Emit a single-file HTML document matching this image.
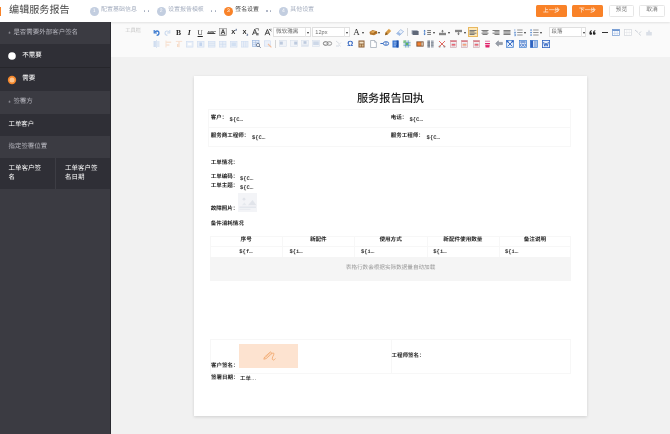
<!DOCTYPE html>
<html lang="zh-CN">
<head>
<meta charset="utf-8">
<title>编辑服务报告</title>
<style>
*{box-sizing:border-box;margin:0;padding:0}
html,body{width:670px;height:434px;overflow:hidden}
body{position:relative;background:#f1f1f1;font-family:"Liberation Sans","Noto Sans CJK SC",sans-serif;color:#333;font-size:6px;line-height:1;text-rendering:geometricPrecision}
#wrap{position:absolute;left:0;top:0;width:670px;height:434px;will-change:transform}
.abs{position:absolute;white-space:nowrap}
/* header */
#hdr{position:absolute;left:0;top:0;width:670px;height:21.6px;background:#fff;box-shadow:0 0.5px 2px rgba(0,0,0,.10);z-index:3}
#hbar{position:absolute;left:0;top:6.5px;width:1.2px;height:9px;background:#f98228}
#title{position:absolute;left:9px;top:4.9px;font-size:10.1px;line-height:13px;color:#444;white-space:nowrap}
.step{position:absolute;top:6.5px;height:9px;white-space:nowrap;font-size:5.95px;line-height:9px;color:#b4bcc9}
.step i{position:absolute;left:0;top:0;width:9px;height:9px;border-radius:50%;background:#c3cee0;color:#fff;font-style:normal;font-size:5px;line-height:9px;text-align:center}
.step span{position:absolute;left:11.4px;top:1.2px}
.step.on{color:#444}
.step.on i{background:#f98228}
.dots{position:absolute;top:10.4px;width:5px;height:1.4px}
.dots u{position:absolute;top:0;width:1.4px;height:1.4px;border-radius:50%;background:#a2abbd}
.dots u+u{left:3.6px}
.btn{position:absolute;top:5px;height:12.3px;border-radius:1.5px;font-size:5.65px;line-height:14.6px;text-align:center;white-space:nowrap}
.btn.o{background:#f98228;color:#fff}
.btn.w{background:#fff;border:0.5px solid #e6e6e6;color:#666;line-height:13.6px}
/* sidebar */
#side{z-index:4;position:absolute;left:0;top:22px;width:111px;height:412px;background:#3b3b42;border-right:1px solid #2a2a30}
.srow{position:absolute;left:0;width:110px;white-space:nowrap}
.srow.h{color:#aeaeb6;font-size:6.45px;line-height:8px}
.srow.d{background:#2f2f36;color:#fff;font-size:6.45px;line-height:8px}
.srow span{position:absolute}
.radio{position:absolute;left:8.6px;width:7.6px;height:7.6px;border-radius:50%;background:#fff}
.radio.on{left:7.8px;width:8.4px;height:8.4px;background:#fdc085;border:2px solid #f68a30}
/* toolbar */
#tb{position:absolute;left:111px;top:22px;width:559px;height:35px;background:#fafafa}
#tb .lbl{position:absolute;left:14.2px;top:6.6px;font-size:5.6px;line-height:8px;color:#c4c4c4}
.ic{position:absolute;overflow:visible}
.tx{position:absolute;height:10px;line-height:10px;text-align:center;white-space:nowrap}
.sp{position:absolute;width:0.5px;height:8px;background:#d4d4d4}
.act{position:absolute;width:10px;height:10px;background:#fde8b8;border:0.5px solid #e8b860}
.hr{position:absolute;width:6.5px;height:0.9px;background:#333}
.sel{position:absolute;height:10px;background:#fff;border:0.5px solid #e0e0e0;font-size:5.6px;line-height:10.4px;color:#6e6e6e;padding-left:2px;white-space:nowrap}
.sel s{position:absolute;right:4px;top:0;width:0.5px;height:9px;background:#e6e6e6}
.car{position:absolute;width:0;height:0;border-left:1.5px solid transparent;border-right:1.5px solid transparent;border-top:2px solid #333}
/* paper */
#paper{position:absolute;left:193.5px;top:75.5px;width:393.8px;height:340.3px;background:#fff;box-shadow:0 1px 3px rgba(0,0,0,.14)}
#pin{position:absolute;left:0.5px;top:0.5px;width:393px;height:339px}
#ptitle{position:absolute;left:0;top:16.6px;width:393px;text-align:center;font-size:11.2px;font-weight:500;line-height:16px;color:#222;white-space:nowrap}
.t{position:absolute;font-size:5.5px;line-height:7px;color:#222;white-space:nowrap}
.t b{font-weight:600}
.v{font-family:"Liberation Mono",monospace;font-size:5.5px;color:#333;font-weight:bold}
.bx{position:absolute;border:0.5px solid #f7f7f7}
.ln{position:absolute;background:#f7f7f7}
.th{text-align:center}
.ph{position:absolute;background:#f3f4f7}
.gb{position:absolute;background:#f5f5f5;color:#9a9a9a;font-size:5.6px;line-height:26.6px;overflow:hidden;text-align:center;white-space:nowrap}
.sig{position:absolute;background:#fde3d0}
.k{position:absolute;white-space:nowrap;line-height:1;font-family:"Liberation Sans","Noto Sans CJK SC",sans-serif}
.k span{position:absolute;left:0;top:0}
.k.b{font-weight:bold}
.ast{position:absolute;font-size:6.45px;line-height:8px;color:#aeaeb6}
.rd{position:absolute;width:10px;height:10px}
</style>
</head>
<body>
<div id="wrap">
<div id="hdr">
  <div id="hbar"></div>
  <div class="k" style="left:9.10px;top:5.85px;width:60.60px;height:10.1px;font-size:10.1px;color:#484848"><span>编辑服务报告</span></div>
  <div class="step" style="left:89.7px"><i>1</i></div><div class="k" style="left:101.10px;top:7.92px;width:35.82px;height:5.97px;font-size:5.97px;color:#a6afc0"><span>配置基础信息</span></div>
  <div class="dots" style="left:144.1px"><u></u><u></u></div>
  <div class="step" style="left:156.7px"><i>2</i></div><div class="k" style="left:168.00px;top:7.92px;width:35.82px;height:5.97px;font-size:5.97px;color:#a6afc0"><span>设置报告模板</span></div>
  <div class="dots" style="left:211.1px"><u></u><u></u></div>
  <div class="step on" style="left:224px"><i>3</i></div><div class="k" style="left:235.30px;top:7.96px;width:23.48px;height:5.87px;font-size:5.87px;color:#3c3c3c"><span>签名设置</span></div>
  <div class="dots" style="left:266.3px"><u></u><u></u></div>
  <div class="step" style="left:279px"><i>4</i></div><div class="k" style="left:290.20px;top:7.92px;width:23.88px;height:5.97px;font-size:5.97px;color:#a6afc0"><span>其他设置</span></div>
  <div class="btn o" style="left:536px;width:31px"></div><div class="k" style="left:543.10px;top:8.70px;width:16.80px;height:5.6px;font-size:5.6px;color:#fff"><span>上一步</span></div>
  <div class="btn o" style="left:572px;width:31px"></div><div class="k" style="left:579.10px;top:8.70px;width:16.80px;height:5.6px;font-size:5.6px;color:#fff"><span>下一步</span></div>
  <div class="btn w" style="left:608.6px;width:25.8px"></div><div class="k" style="left:615.85px;top:8.22px;width:11.50px;height:5.75px;font-size:5.75px;color:#707070"><span>预览</span></div>
  <div class="btn w" style="left:639.2px;width:25.8px"></div><div class="k" style="left:646.35px;top:8.22px;width:11.50px;height:5.75px;font-size:5.75px;color:#707070"><span>取消</span></div>
</div>
<div id="side">
  <div class="srow h" style="top:0;height:22.4px"><span class="ast" style="left:8.2px;top:8.5px">*</span></div><div class="k" style="left:13.40px;top:8.16px;width:64.70px;height:6.47px;font-size:6.47px;color:#b6b6be"><span>是否需要外部客户签名</span></div>
  <div class="srow d" style="top:22.4px;height:23px"><svg class="rd" style="left:7.4px;top:6.6px" viewBox="0 0 10 10"><circle cx="5" cy="5" r="3.8" fill="#fff"/></svg></div><div class="k" style="left:22.30px;top:30.77px;width:19.41px;height:6.47px;font-size:6.47px;color:#fff"><span>不需要</span></div>
  <div class="srow d" style="top:45px;height:23.9px;border-top:0.6px solid #26262b"><svg class="rd" style="left:7px;top:7.3px" viewBox="0 0 10 10"><circle cx="5" cy="5" r="4.2" fill="#f5872c"/><circle cx="5" cy="5" r="2.5" fill="#fdc48c"/></svg></div><div class="k" style="left:22.30px;top:54.17px;width:12.94px;height:6.47px;font-size:6.47px;color:#fff"><span>需要</span></div>
  <div class="srow h" style="top:68.9px;height:22.7px"><span class="ast" style="left:8.2px;top:9.4px">*</span></div><div class="k" style="left:13.40px;top:77.06px;width:19.41px;height:6.47px;font-size:6.47px;color:#b6b6be"><span>签署方</span></div>
  <div class="srow d" style="top:91.6px;height:22.3px"></div><div class="k" style="left:8.60px;top:99.80px;width:25.60px;height:6.4px;font-size:6.4px;color:#fff"><span>工单客户</span></div>
  <div class="srow h" style="top:113.9px;height:22.3px"></div><div class="k" style="left:8.60px;top:121.78px;width:38.58px;height:6.43px;font-size:6.43px;color:#b6b6be"><span>指定签署位置</span></div>
  <div class="srow d" style="top:136.2px;height:30.4px;width:110px"></div><div style="position:absolute;left:54.7px;top:136.2px;width:0.8px;height:30.4px;background:#3d3d44"></div><div class="k" style="left:8.60px;top:144.45px;width:32.50px;height:6.5px;font-size:6.5px;color:#fff"><span>工单客户签</span></div><div class="k" style="left:8.60px;top:152.75px;width:6.50px;height:6.5px;font-size:6.5px;color:#fff"><span>名</span></div>
  <div class="k" style="left:64.90px;top:144.45px;width:32.50px;height:6.5px;font-size:6.5px;color:#fff"><span>工单客户签</span></div><div class="k" style="left:64.90px;top:152.75px;width:19.50px;height:6.5px;font-size:6.5px;color:#fff"><span>名日期</span></div>
</div>
<div id="tb">
  <div class="k" style="left:14.30px;top:7.48px;width:15.75px;height:5.25px;font-size:5.25px;color:#c2c2c2"><span>工具栏</span></div>
  <svg class="ic" style="left:41.7px;top:6.9px;width:7px;height:7px" viewBox="0 0 7 7"><path d="M1.2 1 L1.2 4 L4 4" fill="none" stroke="#3b7ad0" stroke-width="1.2"/><path d="M1.6 3.6 C3 1.2 6 1.6 6 4 C6 5.4 5 6.3 3.6 6.4" fill="none" stroke="#3b7ad0" stroke-width="1.3"/></svg>
  <svg class="ic" style="left:52.5px;top:6.9px;width:7px;height:7px;opacity:0.7" viewBox="0 0 7 7"><path d="M5.8 1 L5.8 4 L3 4" fill="none" stroke="#b9cde8" stroke-width="1.1"/><path d="M5.4 3.6 C4 1.2 1 1.6 1 4 C1 5.4 2 6.3 3.4 6.4" fill="none" stroke="#b9cde8" stroke-width="1.1"/></svg>
  <div class="tx" style="left:62.5px;top:6.0px;width:10px;font-family:'Liberation Serif',serif;font-weight:bold;font-size:7.5px;color:#222">B</div>
  <div class="tx" style="left:73.2px;top:6.0px;width:10px;font-family:'Liberation Serif',serif;font-weight:bold;font-style:italic;font-size:7.5px;color:#222">I</div>
  <div class="tx" style="left:84.2px;top:6.0px;width:10px;font-family:'Liberation Serif',serif;font-size:7.2px;color:#222;text-decoration:underline">U</div>
  <div class="tx" style="left:94.4px;top:5.8px;width:12px;font-family:'Liberation Sans',sans-serif;font-weight:bold;font-style:italic;font-size:4.3px;color:#333;letter-spacing:-0.2px">ABC</div>
  <div class="hr" style="left:96.6px;top:10.9px;width:7.6px;height:0.5px;background:#444"></div>
  <svg class="ic" style="left:107.9px;top:6.4px;width:8px;height:8px" viewBox="0 0 8 8"><rect x="0.4" y="0.4" width="7.2" height="7.2" fill="#ececec" stroke="#8a8a8a" stroke-width="0.6"/><path d="M2.2 6 L4 1.4 L5.8 6 M2.9 4.4 L5.1 4.4" fill="none" stroke="#222" stroke-width="0.8"/><path d="M1.6 6.9 H6.4" stroke="#333" stroke-width="0.5"/></svg>
  <div class="tx" style="left:118.2px;top:5.7px;width:10px;font-family:'Liberation Sans',sans-serif;font-weight:bold;font-size:6px;color:#222">X<sup style="font-size:3.2px;color:#223a6a;vertical-align:top;line-height:5px">2</sup></div>
  <div class="tx" style="left:129.4px;top:5.7px;width:10px;font-family:'Liberation Sans',sans-serif;font-weight:bold;font-size:6px;color:#222">X<sub style="font-size:3.2px;color:#223a6a;vertical-align:bottom;line-height:5px">2</sub></div>
  <svg class="ic" style="left:140.3px;top:6.4px;width:8px;height:8px" viewBox="0 0 8 8"><path d="M1.5 7 L3.8 1.2 L6.1 7 M2.4 5 L5.2 5" fill="none" stroke="#333" stroke-width="0.9"/><path d="M4.5 0.6 L7.4 0.6 L7.4 2.6" fill="none" stroke="#555" stroke-width="0.7"/><rect x="5.2" y="5" width="2.4" height="2.4" fill="#777"/></svg>
  <svg class="ic" style="left:153.3px;top:6.4px;width:8px;height:8px" viewBox="0 0 8 8"><path d="M1 7.2 L3.4 1.4 L5.8 7.2 M1.9 5.2 L4.8 5.2" fill="none" stroke="#333" stroke-width="0.9"/><path d="M5 1 L7.5 3.2" stroke="#555" stroke-width="0.9"/><circle cx="7" cy="1.2" r="0.6" fill="#777"/></svg>
  <div class="sel" style="left:162.4px;top:5.4px;width:37.6px"><!--sel1--><s></s></div>
  <div class="car" style="left:196.3px;top:9.7px"></div>
  <div class="sel" style="left:201.3px;top:5.4px;width:37.7px">12px<s></s></div>
  <div class="car" style="left:235.3px;top:9.7px"></div>
  <div class="tx" style="left:240.6px;top:5.4px;width:10px;font-family:'Liberation Serif',serif;font-size:9px;color:#333">A</div>
  <div class="car" style="left:251.0px;top:9.7px"></div>
  <svg class="ic" style="left:257.5px;top:6.9px;width:9px;height:7px" viewBox="0 0 9 7"><path d="M0.5 3 L3.5 1 L8 2.2 L8.4 4.5 L5 6.3 L1 5.4 Z" fill="#b5762a"/><path d="M1.2 3.2 L3.6 1.8 L7 2.6 L4.6 4.2 Z" fill="#e0a757"/><path d="M4.6 4.2 L7.6 2.8" stroke="#7a4a14" stroke-width="0.6"/></svg>
  <div class="car" style="left:267.0px;top:9.7px"></div>
  <svg class="ic" style="left:273.3px;top:6.4px;width:8px;height:8px" viewBox="0 0 8 8"><path d="M5 0.8 L7.2 3 L4 6.2 L1 7.2 L1.8 4 Z" fill="#d79a45"/><path d="M1 7.2 L1.8 4 L4 6.2 Z" fill="#8a5a1c"/><path d="M5.6 1.4 L6.6 2.4" stroke="#f4d9a8" stroke-width="0.8"/></svg>
  <svg class="ic" style="left:284.8px;top:6.9px;width:8px;height:7px" viewBox="0 0 8 7"><path d="M4.6 0.6 L7.6 2.6 L3.6 6.4 L0.6 4.6 Z" fill="#eaf1fb" stroke="#8faedb" stroke-width="0.7"/><path d="M0.6 4.6 L2.4 3 L5.2 4.9 L3.6 6.4 Z" fill="#9fbbe3"/></svg>
  <div class="sp" style="left:295.7px;top:6.4px"></div>
  <svg class="ic" style="left:300.0px;top:6.9px;width:8px;height:7px" viewBox="0 0 8 7"><rect x="0.6" y="1.2" width="6" height="4" fill="#97a0b0"/><rect x="1.6" y="2" width="6" height="4" fill="#5f6878"/></svg>
  <svg class="ic" style="left:311.5px;top:6.9px;width:9px;height:7px" viewBox="0 0 9 7"><path d="M1.6 0.8 L0.4 2.2 L2.8 2.2 Z M1.6 6.2 L0.4 4.8 L2.8 4.8 Z" fill="#3b74c4"/><path d="M1.6 2 L1.6 5" stroke="#3b74c4" stroke-width="0.7"/><path d="M4.2 1.6 H8 M4.2 3.5 H8 M4.2 5.4 H8" stroke="#666" stroke-width="0.9"/></svg>
  <div class="car" style="left:321.5px;top:9.7px"></div>
  <svg class="ic" style="left:327.2px;top:6.9px;width:9px;height:7px" viewBox="0 0 9 7"><path d="M4.5 0.8 L3.2 2.4 L5.8 2.4 Z" fill="#666"/><path d="M4.5 2.2 V3.6" stroke="#666" stroke-width="0.8"/><rect x="1" y="3.8" width="7" height="2.4" fill="#858585"/></svg>
  <div class="car" style="left:336.9px;top:9.7px"></div>
  <svg class="ic" style="left:342.8px;top:6.9px;width:9px;height:7px" viewBox="0 0 9 7"><rect x="1" y="0.8" width="7" height="2.4" fill="#858585"/><path d="M4.5 3.2 V4.8" stroke="#666" stroke-width="0.8"/><path d="M4.5 6.2 L3.2 4.6 L5.8 4.6 Z" fill="#666"/></svg>
  <div class="car" style="left:352.7px;top:9.7px"></div>
  <div class="act" style="left:357.0px;top:5.4px"></div>
  <svg class="ic" style="left:358.0px;top:6.9px;width:8px;height:7px" viewBox="0 0 8 7"><rect x="0.5" y="1.0" width="7" height="0.95" fill="#757575"/><rect x="0.5" y="2.35" width="5" height="0.95" fill="#757575"/><rect x="0.5" y="3.7" width="7" height="0.95" fill="#757575"/><rect x="0.5" y="5.050000000000001" width="5" height="0.95" fill="#757575"/></svg>
  <svg class="ic" style="left:370.0px;top:6.9px;width:8px;height:7px" viewBox="0 0 8 7"><rect x="0.5" y="1.0" width="7" height="0.95" fill="#757575"/><rect x="1.5" y="2.35" width="5" height="0.95" fill="#757575"/><rect x="0.5" y="3.7" width="7" height="0.95" fill="#757575"/><rect x="1.5" y="5.050000000000001" width="5" height="0.95" fill="#757575"/></svg>
  <svg class="ic" style="left:381.2px;top:6.9px;width:8px;height:7px" viewBox="0 0 8 7"><rect x="0.5" y="1.0" width="7" height="0.95" fill="#757575"/><rect x="2.5" y="2.35" width="5" height="0.95" fill="#757575"/><rect x="0.5" y="3.7" width="7" height="0.95" fill="#757575"/><rect x="2.5" y="5.050000000000001" width="5" height="0.95" fill="#757575"/></svg>
  <svg class="ic" style="left:392.3px;top:6.9px;width:8px;height:7px" viewBox="0 0 8 7"><rect x="0.5" y="1.0" width="7" height="0.95" fill="#757575"/><rect x="0.5" y="2.35" width="7" height="0.95" fill="#757575"/><rect x="0.5" y="3.7" width="7" height="0.95" fill="#757575"/><rect x="0.5" y="5.050000000000001" width="7" height="0.95" fill="#757575"/></svg>
  <svg class="ic" style="left:403.3px;top:6.9px;width:9px;height:7px" viewBox="0 0 9 7"><path d="M3.2 1 H8.6 M3.2 3.5 H8.6 M3.2 6 H8.6" stroke="#7a7a7a" stroke-width="0.8"/><path d="M0.8 0.2 V1.8 M0.4 3 H1.6 V3.6 H0.4 V4.2 H1.6 M0.4 5.4 H1.6 V6.8 H0.4 M0.4 6.1 H1.6" stroke="#2f6fc6" stroke-width="0.5" fill="none"/></svg>
  <div class="car" style="left:413.2px;top:9.7px"></div>
  <svg class="ic" style="left:419.3px;top:6.9px;width:9px;height:7px" viewBox="0 0 9 7"><path d="M3.2 1 H8.6 M3.2 3.5 H8.6 M3.2 6 H8.6" stroke="#7a7a7a" stroke-width="0.8"/><rect x="0.4" y="0.4" width="1.3" height="1.3" fill="#2f6fc6"/><rect x="0.4" y="2.9" width="1.3" height="1.3" fill="#2f6fc6"/><rect x="0.4" y="5.4" width="1.3" height="1.3" fill="#2f6fc6"/></svg>
  <div class="car" style="left:428.8px;top:9.7px"></div>
  <div class="sel" style="left:437.7px;top:5.4px;width:37.6px"><!--sel2--><s></s></div>
  <div class="car" style="left:471.6px;top:9.7px"></div>
  <svg class="ic" style="left:478.2px;top:7.9px;width:7px;height:5px" viewBox="0 0 7 5"><path d="M0.4 3.4 C0.4 1.6 1.2 0.6 2.8 0.3 L2.9 0.9 C2.1 1.2 1.8 1.7 1.8 2.2 C2.6 2.2 3.1 2.7 3.1 3.4 C3.1 4.2 2.5 4.7 1.8 4.7 C1 4.7 0.4 4.2 0.4 3.4 Z M3.9 3.4 C3.9 1.6 4.7 0.6 6.3 0.3 L6.4 0.9 C5.6 1.2 5.3 1.7 5.3 2.2 C6.1 2.2 6.6 2.7 6.6 3.4 C6.6 4.2 6 4.7 5.3 4.7 C4.5 4.7 3.9 4.2 3.9 3.4 Z" fill="#222"/></svg>
  <div class="hr" style="left:490.5px;top:10.0px"></div>
  <svg class="ic" style="left:500.5px;top:6.9px;width:8px;height:7px" viewBox="0 0 8 7"><rect x="0.4" y="0.4" width="7.2" height="6.2" fill="#fff" stroke="#6d95cf" stroke-width="0.7"/><rect x="0.4" y="0.4" width="7.2" height="1.6" fill="#6d95cf"/><path d="M2.8 2 V6.6 M5.2 2 V6.6 M0.4 4.3 H7.6" stroke="#a9c1e4" stroke-width="0.5"/></svg>
  <svg class="ic" style="left:512.8px;top:6.9px;width:8px;height:7px;opacity:0.8" viewBox="0 0 8 7"><rect x="0.4" y="0.4" width="7.2" height="6.2" fill="#fff" stroke="#c9cdd4" stroke-width="0.7"/><path d="M2.8 0.4 V6.6 M5.2 0.4 V6.6 M0.4 3.5 H7.6" stroke="#dadde2" stroke-width="0.5"/></svg>
  <svg class="ic" style="left:522.7px;top:6.9px;width:8px;height:7px;opacity:0.9" viewBox="0 0 8 7"><path d="M1 1 L4 3.5 M7 2.5 L5 4.5 L6.5 6.5" stroke="#c7ccd4" stroke-width="1" fill="none"/></svg>
  <svg class="ic" style="left:533.5px;top:6.9px;width:8px;height:7px;opacity:0.9" viewBox="0 0 8 7"><path d="M4 0.5 L5.2 3 H6.8 V6.4 H1.2 V3 H2.8 Z" fill="#d6dbe4"/></svg>
  <svg class="ic" style="left:41.7px;top:17.7px;width:7px;height:8px;opacity:0.5" viewBox="0 0 7 8"><rect x="0.5" y="1" width="2.4" height="6" fill="#a7c2e6"/><rect x="4.1" y="1" width="2.4" height="6" fill="#c6d8f0"/><path d="M3.5 0 V8" stroke="#8fb0de" stroke-width="0.6"/></svg>
  <svg class="ic" style="left:52.7px;top:17.7px;width:8px;height:8px;opacity:0.5" viewBox="0 0 8 8"><path d="M2 0.5 V7.5" stroke="#f3bf9a" stroke-width="0.8"/><path d="M2 2.2 H7.2 M2 5 H5.4" stroke="#f6cdb0" stroke-width="1.4"/></svg>
  <svg class="ic" style="left:63.5px;top:17.7px;width:8px;height:8px;opacity:0.5" viewBox="0 0 8 8"><path d="M0.8 1.4 H7.2" stroke="#f6c9ab" stroke-width="1"/><path d="M4 1.4 V7.2 M2.6 4 V7" stroke="#f3bf9a" stroke-width="1.2"/></svg>
  <svg class="ic" style="left:74.8px;top:18.5px;width:7.4px;height:6.5px;opacity:0.6" viewBox="0 0 8 7"><rect x="0.4" y="0.4" width="7.2" height="6.2" fill="#dfe9f7" stroke="#b4cbeb" stroke-width="0.7"/><rect x="2" y="2.2" width="4" height="2.4" fill="#fff"/></svg>
  <svg class="ic" style="left:85.8px;top:18.5px;width:7.4px;height:6.5px;opacity:0.6" viewBox="0 0 8 7"><rect x="0.4" y="0.4" width="7.2" height="6.2" fill="#dfe9f7" stroke="#b4cbeb" stroke-width="0.7"/><rect x="2.6" y="1.6" width="2.8" height="3.8" fill="#9fbce6"/></svg>
  <svg class="ic" style="left:96.7px;top:18.5px;width:7.4px;height:6.5px;opacity:0.6" viewBox="0 0 8 7"><rect x="0.4" y="0.4" width="7.2" height="6.2" fill="#dfe9f7" stroke="#b4cbeb" stroke-width="0.7"/><path d="M0.4 2.4 H7.6 M0.4 4.6 H7.6" stroke="#a9c3e8" stroke-width="0.6"/></svg>
  <svg class="ic" style="left:107.7px;top:18.5px;width:7.4px;height:6.5px;opacity:0.6" viewBox="0 0 8 7"><rect x="0.4" y="0.4" width="7.2" height="6.2" fill="#dfe9f7" stroke="#b4cbeb" stroke-width="0.7"/><path d="M4 0.4 V6.6 M0.4 3.5 H7.6" stroke="#a9c3e8" stroke-width="0.6"/></svg>
  <svg class="ic" style="left:118.7px;top:18.5px;width:7.4px;height:6.5px;opacity:0.6" viewBox="0 0 8 7"><rect x="0.4" y="0.4" width="7.2" height="6.2" fill="#dfe9f7" stroke="#b4cbeb" stroke-width="0.7"/><rect x="1.6" y="1.6" width="4.8" height="3.8" fill="#b9cfee"/></svg>
  <svg class="ic" style="left:130.1px;top:18.5px;width:7.4px;height:6.5px;opacity:0.6" viewBox="0 0 8 7"><rect x="0.4" y="0.4" width="7.2" height="6.2" fill="#dfe9f7" stroke="#b4cbeb" stroke-width="0.7"/><path d="M2.8 0.4 V6.6 M5.2 0.4 V6.6" stroke="#a9c3e8" stroke-width="0.6"/></svg>
  <svg class="ic" style="left:140.8px;top:17.7px;width:9px;height:8px" viewBox="0 0 9 8"><rect x="0.4" y="0.6" width="6.6" height="6" fill="#e7eef9" stroke="#9db8e0" stroke-width="0.7"/><path d="M0.4 2.6 H7 M0.4 4.6 H7 M3.6 0.6 V6.6" stroke="#9db8e0" stroke-width="0.5"/><circle cx="6" cy="5" r="1.6" fill="#fff" stroke="#4d5d78" stroke-width="0.7"/><path d="M7.1 6.2 L8.6 7.7" stroke="#4d5d78" stroke-width="0.9"/></svg>
  <svg class="ic" style="left:153.3px;top:17.7px;width:8px;height:8px;opacity:0.85" viewBox="0 0 8 8"><rect x="0.4" y="0.8" width="6" height="5.4" fill="#e9eff9" stroke="#c2d3ee" stroke-width="0.6"/><path d="M4 4 L7.4 7.4" stroke="#f3b48a" stroke-width="1.1"/></svg>
  <div class="sp" style="left:164.0px;top:17.7px"></div>
  <svg class="ic" style="left:167.6px;top:18.2px;width:8px;height:7px;opacity:0.8" viewBox="0 0 8 7"><rect x="0.4" y="0.4" width="7.2" height="6.2" fill="#eef2f8" stroke="#cfd9e8" stroke-width="0.6"/><rect x="0.8" y="1.6" width="3" height="3" fill="#aebfd8"/></svg>
  <svg class="ic" style="left:179.1px;top:18.2px;width:8px;height:7px;opacity:0.8" viewBox="0 0 8 7"><rect x="0.4" y="0.4" width="7.2" height="6.2" fill="#eef2f8" stroke="#cfd9e8" stroke-width="0.6"/><rect x="4.2" y="1.6" width="3" height="3" fill="#aebfd8"/></svg>
  <svg class="ic" style="left:190.1px;top:18.2px;width:8px;height:7px;opacity:0.8" viewBox="0 0 8 7"><rect x="0.4" y="0.4" width="7.2" height="6.2" fill="#eef2f8" stroke="#cfd9e8" stroke-width="0.6"/><rect x="2.5" y="1.2" width="3" height="2.6" fill="#aebfd8"/><path d="M1 5.2 H7" stroke="#c4d0e2" stroke-width="0.7"/></svg>
  <svg class="ic" style="left:201.3px;top:18.2px;width:8px;height:7px;opacity:0.8" viewBox="0 0 8 7"><rect x="0.4" y="0.4" width="7.2" height="6.2" fill="#eef2f8" stroke="#cfd9e8" stroke-width="0.6"/><rect x="1.2" y="1.4" width="5.6" height="3.6" fill="#c2d0e4"/></svg>
  <svg class="ic" style="left:212.2px;top:19.2px;width:9px;height:5px" viewBox="0 0 9 5"><rect x="0.4" y="0.8" width="4.6" height="3.4" rx="1.6" fill="none" stroke="#666" stroke-width="0.9"/><rect x="4" y="0.8" width="4.6" height="3.4" rx="1.6" fill="none" stroke="#888" stroke-width="0.9"/></svg>
  <svg class="ic" style="left:224.3px;top:17.7px;width:7px;height:8px;opacity:0.9" viewBox="0 0 7 8"><path d="M1 1 L4 3.5 M6 2.5 L4 4.5 L5.5 6.5" stroke="#d5d9e0" stroke-width="1" fill="none"/><rect x="1" y="5" width="3" height="2" fill="#e6e9ee"/></svg>
  <div class="tx" style="left:234.3px;top:16.7px;width:10px;font-family:'Liberation Sans',sans-serif;font-weight:bold;font-size:7.5px;color:#2f63c0">Ω</div>
  <svg class="ic" style="left:246.8px;top:17.7px;width:7px;height:8px" viewBox="0 0 7 8"><rect x="0.5" y="0.5" width="6" height="7" fill="#8a5a30"/><rect x="1.4" y="1.6" width="4.2" height="2" fill="#f1e3c8"/><rect x="1.4" y="4.4" width="1.8" height="2.2" fill="#d8b98a"/><rect x="3.8" y="4.4" width="1.8" height="2.2" fill="#d8b98a"/></svg>
  <svg class="ic" style="left:258.5px;top:17.7px;width:7px;height:8px" viewBox="0 0 7 8"><path d="M0.6 0.5 H4.6 L6.4 2.3 V7.5 H0.6 Z" fill="#fff" stroke="#9aa3b0" stroke-width="0.7"/><path d="M4.6 0.5 V2.3 H6.4" fill="none" stroke="#9aa3b0" stroke-width="0.6"/></svg>
  <svg class="ic" style="left:268.5px;top:19.2px;width:9px;height:5px" viewBox="0 0 9 5"><path d="M0.4 2.5 H3" stroke="#3a6fc4" stroke-width="1"/><rect x="3.4" y="0.8" width="5.2" height="3.4" rx="1.7" fill="none" stroke="#3a6fc4" stroke-width="1"/><path d="M6 0.8 V4.2" stroke="#3a6fc4" stroke-width="0.8"/></svg>
  <svg class="ic" style="left:280.7px;top:17.7px;width:7px;height:8px" viewBox="0 0 7 8"><rect x="0.5" y="0.5" width="6" height="7" fill="#2f6fd0"/><path d="M1.6 2.2 H5.4 M1.6 4 H5.4 M1.6 5.8 H4" stroke="#cfe0f8" stroke-width="0.7"/><rect x="4.6" y="0.5" width="1.9" height="7" fill="#1c4fa8"/></svg>
  <svg class="ic" style="left:292.0px;top:17.7px;width:8px;height:8px" viewBox="0 0 8 8"><rect x="0.4" y="0.4" width="7.2" height="7.2" fill="#e6f3e2"/><path d="M0.4 2.8 H7.6 M0.4 5.2 H7.6 M2.8 0.4 V7.6 M5.2 0.4 V7.6" stroke="#3f7fd0" stroke-width="0.7"/><rect x="2.8" y="2.8" width="2.4" height="2.4" fill="#5cb45c"/><rect x="0.4" y="0.4" width="2.4" height="2.4" fill="#7fc47f"/></svg>
  <svg class="ic" style="left:304.5px;top:18.7px;width:8px;height:6px" viewBox="0 0 8 6"><rect x="0.4" y="0.4" width="7.2" height="5.2" fill="#7a4a2a"/><rect x="1.3" y="1.3" width="3.6" height="3.4" fill="#f08030"/><rect x="5.4" y="1.3" width="1.4" height="3.4" fill="#e8d9c0"/></svg>
  <svg class="ic" style="left:316.0px;top:17.7px;width:7px;height:8px" viewBox="0 0 7 8"><rect x="0.4" y="0.4" width="2.6" height="7.2" fill="#8c939e"/><rect x="4" y="0.4" width="2.6" height="7.2" fill="#a9b0ba"/><path d="M0.4 2.8 H3 M0.4 5.2 H3 M4 2.8 H6.6 M4 5.2 H6.6" stroke="#5f6670" stroke-width="0.5"/></svg>
  <svg class="ic" style="left:327.2px;top:17.7px;width:8px;height:8px" viewBox="0 0 8 8"><path d="M1 1 L7 7 M7 1 L1 7" stroke="#dc5a50" stroke-width="0.9"/><circle cx="1.6" cy="6.6" r="0.9" fill="none" stroke="#8a8a8a" stroke-width="0.5"/><circle cx="6.4" cy="6.6" r="0.9" fill="none" stroke="#8a8a8a" stroke-width="0.5"/></svg>
  <svg class="ic" style="left:339.0px;top:17.7px;width:7px;height:8px" viewBox="0 0 7 8"><rect x="0.5" y="0.5" width="6" height="7" fill="#fbeef0" stroke="#c9a0a8" stroke-width="0.6"/><rect x="0.5" y="0.5" width="6" height="1.4" fill="#d9737f"/><path d="M1.6 3.4 H5.4 M1.6 6.2 H5.4" stroke="#b9bfc8" stroke-width="0.6"/><rect x="1.6" y="4.2" width="3.8" height="1.3" fill="#e04858"/></svg>
  <svg class="ic" style="left:350.1px;top:17.7px;width:7px;height:8px" viewBox="0 0 7 8"><rect x="0.5" y="0.5" width="6" height="7" fill="#fbeef0" stroke="#c9a0a8" stroke-width="0.6"/><rect x="0.5" y="0.5" width="6" height="1.4" fill="#d9737f"/><path d="M1.6 3.4 H5.4 M1.6 6.2 H5.4" stroke="#b9bfc8" stroke-width="0.6"/><rect x="1.6" y="4.2" width="3.8" height="1.3" fill="#f09060"/></svg>
  <svg class="ic" style="left:361.7px;top:17.7px;width:7px;height:8px" viewBox="0 0 7 8"><rect x="0.5" y="0.5" width="6" height="7" fill="#fbeef0" stroke="#c9a0a8" stroke-width="0.6"/><rect x="0.5" y="0.5" width="6" height="1.4" fill="#d9737f"/><path d="M1.6 3.4 H5.4 M1.6 6.2 H5.4" stroke="#b9bfc8" stroke-width="0.6"/><rect x="1.6" y="4.2" width="3.8" height="1.3" fill="#e04858"/></svg>
  <svg class="ic" style="left:372.7px;top:17.7px;width:7px;height:8px" viewBox="0 0 7 8"><rect x="1" y="0.6" width="5" height="1.4" fill="#e8a0c0"/><path d="M1 3 H6 L5.4 7.4 H1.6 Z" fill="#e0206a"/><path d="M0.6 4.6 H6.4" stroke="#fff" stroke-width="0.7"/></svg>
  <svg class="ic" style="left:384.3px;top:18.2px;width:8px;height:7px" viewBox="0 0 8 7"><path d="M3.4 0.8 L0.6 3.5 L3.4 6.2 V4.6 H7.4 V2.4 H3.4 Z" fill="#9aa0aa" stroke="#6f7682" stroke-width="0.5"/></svg>
  <svg class="ic" style="left:395.4px;top:17.7px;width:8px;height:8px" viewBox="0 0 8 8"><rect x="0.4" y="0.4" width="7.2" height="7.2" fill="#e3edfa" stroke="#3f7fd0" stroke-width="0.7"/><path d="M1.6 1.6 L6.4 6.4 M6.4 1.6 L1.6 6.4" stroke="#2f63c0" stroke-width="0.9"/><rect x="0.4" y="0.4" width="2" height="2" fill="#2f63c0"/><rect x="5.6" y="0.4" width="2" height="2" fill="#2f63c0"/></svg>
  <svg class="ic" style="left:407.5px;top:17.7px;width:8px;height:8px" viewBox="0 0 8 8"><rect x="0.4" y="0.4" width="7.2" height="7.2" fill="#e3edfa" stroke="#3f7fd0" stroke-width="0.7"/><path d="M1.4 2 H6.6" stroke="#2f63c0" stroke-width="1.1"/><circle cx="2.6" cy="5.2" r="1.2" fill="none" stroke="#2f63c0" stroke-width="0.7"/><circle cx="5.6" cy="5.2" r="1.2" fill="none" stroke="#2f63c0" stroke-width="0.7"/></svg>
  <svg class="ic" style="left:419.4px;top:17.7px;width:8px;height:8px" viewBox="0 0 8 8"><rect x="0.4" y="0.4" width="7.2" height="7.2" fill="#e3edfa" stroke="#3f7fd0" stroke-width="0.7"/><rect x="0.4" y="0.4" width="2.6" height="7.2" fill="#2f63c0"/><path d="M3.8 2 H6.8 M3.8 4 H6.8 M3.8 6 H6.8" stroke="#2f63c0" stroke-width="0.8"/></svg>
  <svg class="ic" style="left:431.3px;top:17.7px;width:8px;height:8px" viewBox="0 0 8 8"><rect x="0.4" y="0.4" width="7.2" height="7.2" fill="#eaf1fc" stroke="#2f63c0" stroke-width="0.8"/><path d="M1.6 2 L2.8 6.2 L4 3 L5.2 6.2 L6.4 2" fill="none" stroke="#2f63c0" stroke-width="0.9"/></svg>
  <div class="k" style="left:165.00px;top:7.70px;width:22.40px;height:5.6px;font-size:5.6px;color:#6e6e6e"><span>微软雅黑</span></div>
  <div class="k" style="left:440.60px;top:7.80px;width:10.80px;height:5.4px;font-size:5.4px;color:#6e6e6e"><span>段落</span></div>
</div>
<div id="paper"><div id="pin">
  <div class="k" style="left:162.90px;top:17.80px;width:67.20px;height:11.2px;font-size:11.2px;color:#1a1a1a;font-weight:500"><span>服务报告回执</span></div>
  <!-- info table -->
  <div class="bx" style="left:14px;top:33.2px;width:363px;height:37.4px"></div>
  <div class="ln" style="left:14px;top:51.1px;width:363px;height:0.5px"></div>
  <div class="k b" style="left:16.70px;top:39.65px;width:16.50px;height:5.5px;font-size:5.5px;color:#222"><span>客户：</span></div><div class="t v" style="left:35.6px;top:39.5px">${C…</div>
  <div class="k b" style="left:196.70px;top:39.65px;width:16.50px;height:5.5px;font-size:5.5px;color:#222"><span>电话：</span></div><div class="t v" style="left:215.5px;top:39.5px">${C…</div>
  <div class="k b" style="left:16.70px;top:58.25px;width:38.50px;height:5.5px;font-size:5.5px;color:#222"><span>服务商工程师：</span></div><div class="t v" style="left:58.0px;top:58.0px">${C…</div>
  <div class="k b" style="left:196.70px;top:58.25px;width:33.00px;height:5.5px;font-size:5.5px;color:#222"><span>服务工程师：</span></div><div class="t v" style="left:232.6px;top:58.0px">${C…</div>
  <!-- order info -->
  <div class="k b" style="left:16.70px;top:84.65px;width:27.50px;height:5.5px;font-size:5.5px;color:#222"><span>工单情况：</span></div>
  <div class="k b" style="left:16.70px;top:99.25px;width:27.50px;height:5.5px;font-size:5.5px;color:#222"><span>工单编码：</span></div><div class="t v" style="left:46.0px;top:99.2px">${C…</div>
  <div class="k b" style="left:16.70px;top:107.95px;width:27.50px;height:5.5px;font-size:5.5px;color:#222"><span>工单主题：</span></div><div class="t v" style="left:46.0px;top:107.9px">${C…</div>
  <div class="ph" style="left:44.3px;top:116.8px;width:19.2px;height:19.2px">
    <svg width="19.2" height="19.2" viewBox="0 0 19.2 19.2"><circle cx="6" cy="6.2" r="1.4" fill="#e1e4ea"/><path d="M10 12.2 L14.6 7 L18.4 12.2 Z" fill="#e1e4ea"/><path d="M4 12.2 L6.4 9.6 L8.6 12.2 Z" fill="#e6e9ee"/><rect x="1.4" y="13.6" width="16.6" height="1.2" fill="#dfe3ea"/><rect x="1.4" y="15.8" width="11" height="1" fill="#e6e9ee"/></svg>
  </div>
  <div class="k b" style="left:16.70px;top:131.05px;width:27.50px;height:5.5px;font-size:5.5px;color:#222"><span>故障照片：</span></div>
  <div class="k b" style="left:16.70px;top:145.75px;width:33.00px;height:5.5px;font-size:5.5px;color:#222"><span>备件消耗情况</span></div>
  <!-- parts table -->
  <div class="bx" style="left:16px;top:159.5px;width:361px;height:22px"></div>
  <div class="ln" style="left:16px;top:169.5px;width:361px;height:0.5px"></div>
  <div class="ln" style="left:88px;top:159.5px;width:0.5px;height:22px"></div>
  <div class="ln" style="left:160px;top:159.5px;width:0.5px;height:22px"></div>
  <div class="ln" style="left:232.6px;top:159.5px;width:0.5px;height:22px"></div>
  <div class="ln" style="left:304.6px;top:159.5px;width:0.5px;height:22px"></div>
  <div class="k b" style="left:46.60px;top:161.80px;width:11.20px;height:5.6px;font-size:5.6px;color:#222"><span>序号</span></div><div class="k b" style="left:115.90px;top:161.80px;width:16.80px;height:5.6px;font-size:5.6px;color:#222"><span>新配件</span></div><div class="k b" style="left:185.40px;top:161.80px;width:22.40px;height:5.6px;font-size:5.6px;color:#222"><span>使用方式</span></div><div class="k b" style="left:249.30px;top:161.80px;width:39.20px;height:5.6px;font-size:5.6px;color:#222"><span>新配件使用数量</span></div><div class="k b" style="left:329.70px;top:161.80px;width:22.40px;height:5.6px;font-size:5.6px;color:#222"><span>备注说明</span></div>
  <div class="t v" style="left:45.3px;top:172.2px">${f…</div><div class="t v" style="left:95.4px;top:172.2px">${i…</div><div class="t v" style="left:167.0px;top:172.2px">${i…</div><div class="t v" style="left:239.3px;top:172.2px">${i…</div><div class="t v" style="left:311.0px;top:172.2px">${i…</div>
  <div class="gb" style="left:16px;top:181.2px;width:361px;height:23.4px"></div>
  <div class="k" style="left:151.80px;top:190.10px;width:89.60px;height:5.6px;font-size:5.6px;color:#9a9a9a"><span>表格行数会根据实际数据量自动加载</span></div>
  <!-- signature table -->
  <div class="bx" style="left:16px;top:263.2px;width:361px;height:34.6px"></div>
  <div class="ln" style="left:196.5px;top:263.5px;width:0.5px;height:34.5px"></div>
  <div class="sig" style="left:45px;top:268px;width:59.3px;height:23.5px">
    <svg width="13" height="10" viewBox="0 0 13 10" style="position:absolute;left:23.5px;top:7px"><path d="M0.8 8.2 L1.6 6 L7.4 0.9 L9 2.4 L3.2 7.6 Z" fill="none" stroke="#f0a468" stroke-width="0.8" stroke-linejoin="round"/><path d="M2.4 6.6 L7.8 1.8" stroke="#f0a468" stroke-width="0.6"/><path d="M9 2.4 C10.6 1.2 11.6 2.4 10.6 4 C9.4 6 8.6 8.6 10 9 C10.8 9.2 11.6 8.6 12.2 7.8" fill="none" stroke="#f0a468" stroke-width="0.8" stroke-linecap="round"/></svg>
  </div>
  <div class="k b" style="left:17.00px;top:287.55px;width:27.50px;height:5.5px;font-size:5.5px;color:#222"><span>客户签名：</span></div>
  <div class="k b" style="left:197.60px;top:278.25px;width:33.00px;height:5.5px;font-size:5.5px;color:#222"><span>工程师签名：</span></div>
  <div class="k b" style="left:17.00px;top:300.45px;width:27.50px;height:5.5px;font-size:5.5px;color:#222"><span>签署日期：</span></div>
  <div class="k" style="left:46.10px;top:300.80px;width:16.20px;height:5.4px;font-size:5.4px;color:#111;font-weight:500"><span>工单…</span></div>
</div></div>
</div>
</body>
</html>
